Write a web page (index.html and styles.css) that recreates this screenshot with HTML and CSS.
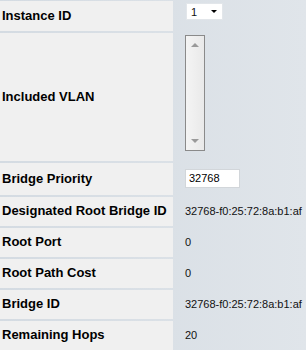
FILE: index.html
```html
<!DOCTYPE html>
<html lang="en">
  <head>
    <meta charset="UTF-8" />
    <title>Spanning Tree Instance</title>
    <link rel="stylesheet" href="styles.css">
  </head>

  <body>
    <div class="form">
      <div class="label">Instance ID</div>
      <div class="value top">
        <div class="dropdown">
          <span>1</span>
          <span class="caret"></span>
        </div>
      </div>

      <div class="label">Included VLAN</div>
      <div class="value top">
        <div class="listbox">
          <span class="arrow up"></span>
          <span class="arrow down"></span>
        </div>
      </div>

      <div class="label">Bridge Priority</div>
      <div class="value">
        <input class="field" type="text" value="32768" />
      </div>

      <div class="label">Designated Root Bridge ID</div>
      <div class="value">32768-f0:25:72:8a:b1:af</div>

      <div class="label">Root Port</div>
      <div class="value">0</div>

      <div class="label">Root Path Cost</div>
      <div class="value">0</div>

      <div class="label">Bridge ID</div>
      <div class="value">32768-f0:25:72:8a:b1:af</div>

      <div class="label">Remaining Hops</div>
      <div class="value">20</div>
    </div>
  </body>
</html>
```

FILE: styles.css
```css
html,
body {
  margin: 0;
  height: 100%;
}

body {
  font-family: "Liberation Sans", Arial, sans-serif;
  padding-top: 1px;
  box-sizing: border-box;
  background: linear-gradient(to right, #d4dbe2, #e0e5ea);
  color: #000;
}

.form {
  display: grid;
  grid-template-columns: 173px 1fr;
  grid-template-rows: 30px 128px 32px;
  grid-auto-rows: 29px;
  row-gap: 2px;
}

.label {
  display: flex;
  align-items: center;
  padding-left: 2px;
  padding-bottom: 2px;
  background-color: #f0f0f0;
  font-size: 13px;
  font-weight: bold;
  white-space: nowrap;
}

.value {
  display: flex;
  align-items: center;
  padding-left: 12px;
  padding-bottom: 2px;
  font-size: 11px;
  color: #111;
}

.value.top {
  align-items: flex-start;
  padding-top: 2px;
}

.dropdown {
  display: flex;
  align-items: center;
  justify-content: space-between;
  box-sizing: border-box;
  width: 37px;
  height: 17px;
  margin-left: 1px;
  padding: 0 5px 0 4px;
  background: #fff;
  border: 1px solid #e2e6ea;
  font-size: 11px;
}

.caret {
  width: 0;
  height: 0;
  border-left: 3px solid transparent;
  border-right: 3px solid transparent;
  border-top: 3px solid #000;
}

.listbox {
  display: flex;
  flex-direction: column;
  justify-content: space-between;
  align-items: center;
  box-sizing: border-box;
  width: 20px;
  height: 116px;
  padding: 7px 0 7px;
  border: 1px solid #8a8a8a;
  background: linear-gradient(to right, #f4f4f4, #e9e9e9);
}

.arrow {
  width: 0;
  height: 0;
  border-left: 4px solid transparent;
  border-right: 4px solid transparent;
}

.arrow.up {
  border-bottom: 4px solid #9a9a9a;
}

.arrow.down {
  border-top: 4px solid #9a9a9a;
}

.field {
  box-sizing: border-box;
  width: 55px;
  height: 19px;
  margin: 0;
  padding: 0 3px;
  border: 1px solid #d2d6da;
  background: #fff;
  font-family: "Liberation Sans", Arial, sans-serif;
  font-size: 11px;
  color: #000;
  outline: none;
}
```
